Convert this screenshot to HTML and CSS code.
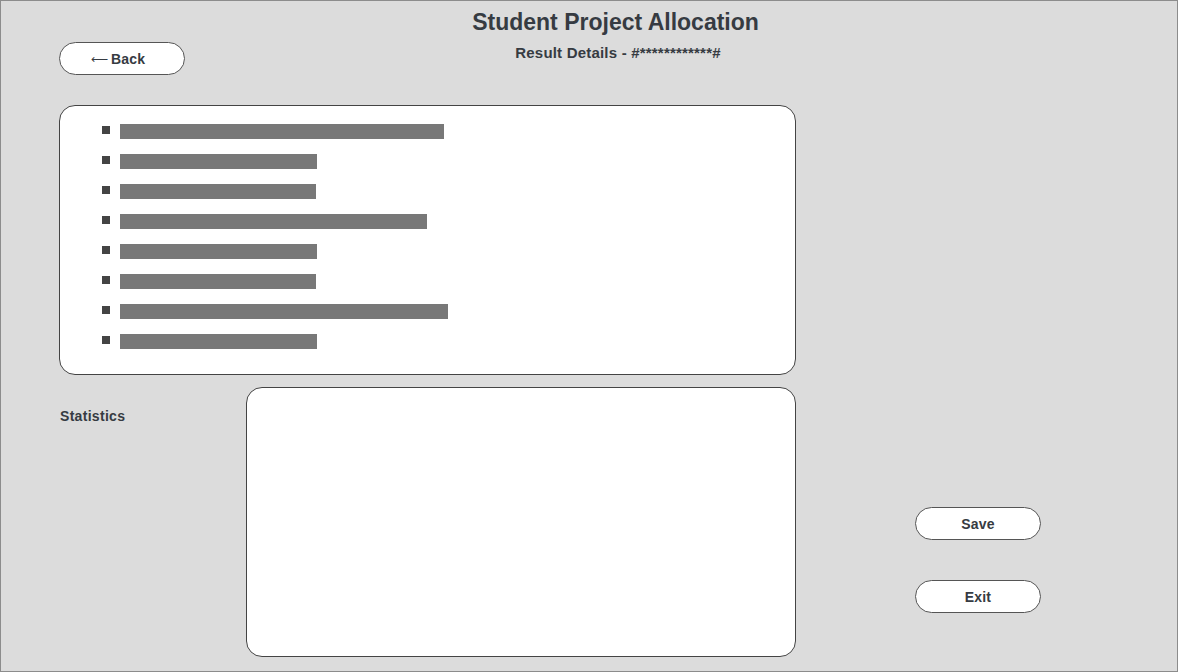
FILE: index.html
```html
<!DOCTYPE html>
<html lang="en">
<head>
<meta charset="utf-8">
<title>Student Project Allocation</title>
<link rel="stylesheet" href="styles.css">
</head>
<body>
<div class="frame">
  <header class="header">
    <h1 class="title">Student Project Allocation</h1>
    <div class="subrow">
      <div class="subrow-left"><button class="pill"><span class="arrow">&#x27F5;</span> Back</button></div>
      <h2 class="subtitle">Result Details - #************#</h2>
      <div></div>
    </div>
  </header>

  <section class="panel results">
    <ul class="list">
      <li class="item"><span class="bullet"></span><span class="bar" style="width:324px"></span></li>
      <li class="item"><span class="bullet"></span><span class="bar" style="width:197px"></span></li>
      <li class="item"><span class="bullet"></span><span class="bar" style="width:196px"></span></li>
      <li class="item"><span class="bullet"></span><span class="bar" style="width:307px"></span></li>
      <li class="item"><span class="bullet"></span><span class="bar" style="width:197px"></span></li>
      <li class="item"><span class="bullet"></span><span class="bar" style="width:196px"></span></li>
      <li class="item"><span class="bullet"></span><span class="bar" style="width:328px"></span></li>
      <li class="item"><span class="bullet"></span><span class="bar" style="width:197px"></span></li>
    </ul>
  </section>

  <section class="lower">
    <div class="stats-label">Statistics</div>
    <div class="panel stats"></div>
    <div class="actions">
      <button class="pill">Save</button>
      <button class="pill">Exit</button>
    </div>
  </section>
</div>
</body>
</html>
```

FILE: styles.css
```css
* { box-sizing: border-box; }

html, body {
  margin: 0;
  padding: 0;
}

body {
  font-family: "Liberation Sans", Arial, sans-serif;
  color: #363b42;
}

.frame {
  width: 1178px;
  height: 672px;
  border: 1px solid #8c8c8c;
  background: #dcdcdc;
  padding: 8px 0 0 58px;
  overflow: hidden;
}

.header {
  display: flex;
  flex-direction: column;
}

.title {
  margin: 0 0 0 -5px;
  font-size: 23px;
  line-height: 26px;
  font-weight: bold;
  text-align: center;
}

.subrow {
  margin-top: 7px;
  display: grid;
  grid-template-columns: 1fr auto 1fr;
  align-items: start;
}

.subtitle {
  margin: 2px 0 0 0;
  font-size: 15px;
  line-height: 17px;
  font-weight: bold;
  letter-spacing: 0.2px;
}

.pill {
  width: 126px;
  height: 33px;
  border: 1px solid #555;
  border-radius: 17px;
  background: #fff;
  font-family: "Liberation Sans", Arial, sans-serif;
  font-size: 14px;
  font-weight: bold;
  color: #363b42;
  padding: 0;
  display: flex;
  align-items: center;
  justify-content: center;
  letter-spacing: 0.2px;
}

.arrow {
  font-family: "DejaVu Sans", sans-serif;
  font-weight: normal;
  font-size: 12px;
  margin-right: 3px;
  margin-left: -8px;
}

.panel {
  background: #fff;
  border: 1px solid #444;
  border-radius: 16px;
}

.results {
  margin-top: 30px;
  width: 737px;
  height: 270px;
}

.list {
  list-style: none;
  margin: 0;
  padding: 18px 0 0 42px;
}

.item {
  display: flex;
  align-items: flex-start;
  height: 15px;
  margin-bottom: 15px;
}

.bullet {
  width: 8px;
  height: 8px;
  margin-top: 2px;
  margin-right: 10px;
  background: #444;
  flex: none;
}

.bar {
  height: 15px;
  background: #787878;
  flex: none;
}

.lower {
  margin-top: 12px;
  display: flex;
  align-items: flex-start;
}

.stats-label {
  width: 187px;
  padding-left: 1px;
  margin-top: 21px;
  font-size: 14px;
  line-height: 17px;
  font-weight: bold;
  letter-spacing: 0.3px;
}

.stats {
  width: 550px;
  height: 270px;
}

.actions {
  margin-left: 119px;
  padding-top: 120px;
  display: flex;
  flex-direction: column;
  gap: 40px;
}
```
